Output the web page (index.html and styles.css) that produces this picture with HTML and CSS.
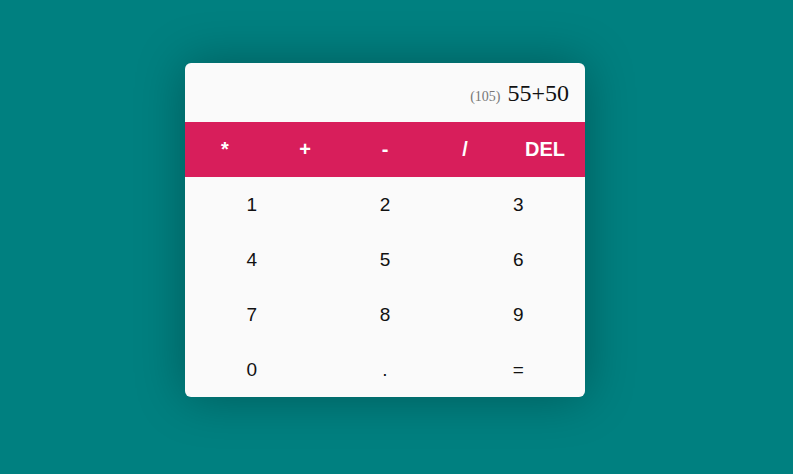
FILE: index.html
```html
<!DOCTYPE html>
<html>
<head>
<meta charset="utf-8">
<link rel="stylesheet" href="styles.css">
</head>
<body>
<div class="calc">
  <div class="display"><span class="result">(105)</span><span class="expr">55+50</span></div>
  <div class="ops">
    <button class="op">*</button>
    <button class="op">+</button>
    <button class="op">-</button>
    <button class="op">/</button>
    <button class="op">DEL</button>
  </div>
  <div class="digits">
    <button class="dg">1</button>
    <button class="dg">2</button>
    <button class="dg">3</button>
    <button class="dg">4</button>
    <button class="dg">5</button>
    <button class="dg">6</button>
    <button class="dg">7</button>
    <button class="dg">8</button>
    <button class="dg">9</button>
    <button class="dg">0</button>
    <button class="dg">.</button>
    <button class="dg">=</button>
  </div>
</div>
</body>
</html>
```
FILE: styles.css
```css
html, body {
  margin: 0;
  padding: 0;
  height: 100%;
}
body {
  background: #008080;
  font-family: "Liberation Sans", Arial, sans-serif;
  padding: 63px 0 0 185px;
  box-sizing: border-box;
}
.calc {
  width: 400px;
  background: #fafafa;
  border-radius: 6px;
  overflow: hidden;
  box-shadow: 0 0 50px rgba(0, 0, 0, 0.3);
}
.display {
  height: 59px;
  box-sizing: border-box;
  display: flex;
  align-items: baseline;
  justify-content: flex-end;
  padding: 17px 16px 0 0;
  font-family: "Liberation Serif", "Times New Roman", serif;
}
.result {
  font-size: 14px;
  color: #777;
  margin-right: 7px;
}
.expr {
  font-size: 24px;
  color: #111;
}
.ops {
  display: grid;
  grid-template-columns: repeat(5, 1fr);
  background: #d81e5b;
  height: 55px;
}
.op {
  border: none;
  background: transparent;
  color: #fff;
  font-family: "Liberation Sans", Arial, sans-serif;
  font-weight: bold;
  font-size: 20px;
  padding: 0;
}
.digits {
  display: grid;
  grid-template-columns: repeat(3, 1fr);
  grid-auto-rows: 55px;
}
.dg {
  border: none;
  background: transparent;
  color: #111;
  font-family: "Liberation Sans", Arial, sans-serif;
  font-size: 19px;
  padding: 0;
}
```
